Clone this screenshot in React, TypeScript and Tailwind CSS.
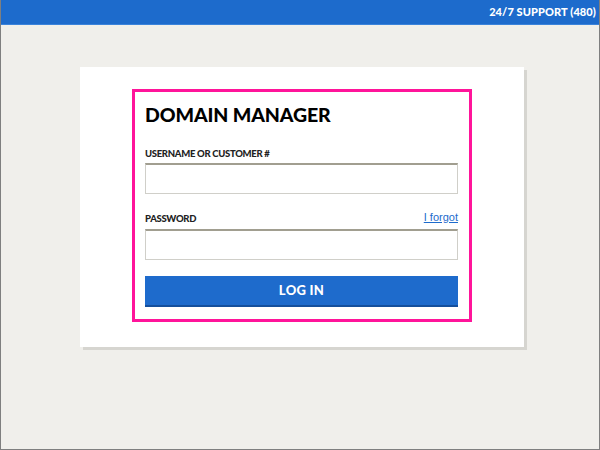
import React from "react";

export default function App() {
  return (
    <div
      className="w-[600px] h-[450px] bg-[#f0efeb] border-x border-b border-[#7f7f7f] box-border flex flex-col"
      style={{ fontFamily: "Lato, 'Liberation Sans', sans-serif" }}
    >
      <div className="h-[25px] bg-[#1d6bcc] border-b border-[#3a83db] flex items-center justify-end pr-[3px] shrink-0">
        <span className="text-white font-black text-[11px] tracking-[0.1px]">24/7 SUPPORT (480)</span>
      </div>
      <div className="pl-[79px] pt-[42px]">
        <div className="w-[444px] h-[280px] bg-white shadow-[3px_3px_0_#d6d5d0] pl-[52px] pt-[22px]">
          <div className="w-[340px] h-[233px] border-[3px] border-[#ff149a] pl-[10px] pr-[11px] pt-[10px] flex flex-col">
            <h1 className="text-[19.5px] leading-[26px] font-black text-black tracking-[-0.1px]">DOMAIN MANAGER</h1>
            <label className="mt-[20px] text-[9.5px] leading-[12px] font-black text-[#222] tracking-[-0.3px]">USERNAME OR CUSTOMER #</label>
            <input
              className="mt-[3px] h-[31px] w-full border border-[#d0cfc9] border-t-2 border-t-[#a19e90] bg-white outline-none"
              type="text"
            />
            <div className="mt-[17px] flex items-end justify-between">
              <label className="text-[9.5px] leading-[12px] font-black text-[#222] tracking-[-0.3px] mb-[-1px]">PASSWORD</label>
              <a href="#" className="text-[11px] leading-[13px] text-[#1d6bcc] underline" style={{ fontFamily: "'Liberation Sans', Arial, sans-serif" }}>I forgot</a>
            </div>
            <input
              className="mt-[5px] h-[31px] w-full border border-[#d0cfc9] border-t-2 border-t-[#a19e90] bg-white outline-none"
              type="password"
            />
            <button className="mt-[16px] h-[31px] w-full bg-[#1e6bcc] border-b-2 border-[#154f9c] text-white font-black text-[13px] tracking-[0.3px]">
              LOG IN
            </button>
          </div>
        </div>
      </div>
    </div>
  );
}
